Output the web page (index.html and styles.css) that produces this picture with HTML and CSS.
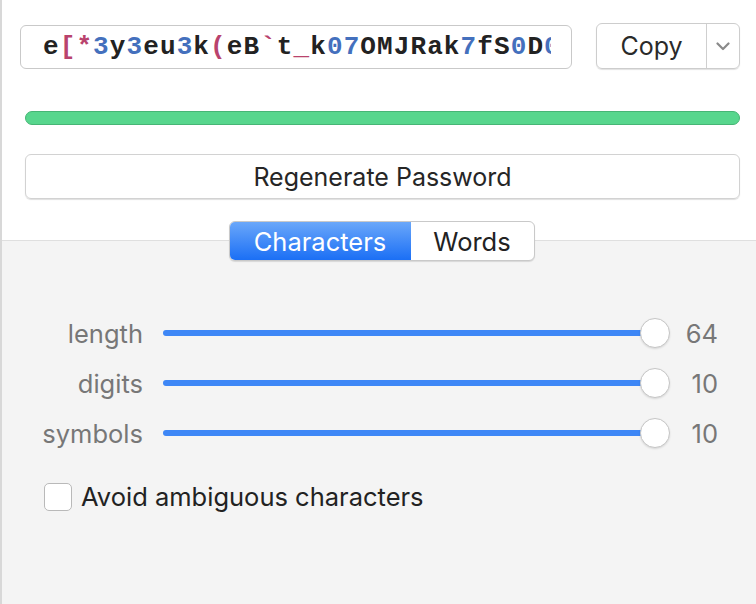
FILE: index.html
```html
<!DOCTYPE html>
<html>
<head>
<meta charset="utf-8">
<link rel="stylesheet" href="styles.css">
</head>
<body>
<div class="app">
  <section class="top">
    <div class="pw-row">
      <div class="pw-field"><span class="pw-text">e<span class="sym">[*</span><span class="dig">3</span>y<span class="dig">3</span>eu<span class="dig">3</span>k<span class="sym">(</span>eB<span class="sym">`</span>t<span class="sym">_</span>k<span class="dig">07</span>OMJRak<span class="dig">7</span>fS<span class="dig">0</span>D<span class="dig">0</span></span></div>
      <div class="copy-btn">
        <span class="copy-label">Copy</span>
        <span class="copy-arrow"><svg width="14" height="9" viewBox="0 0 14 9"><path d="M1.5 1.5 L7 7 L12.5 1.5" fill="none" stroke="#8a8a8a" stroke-width="2.2" stroke-linecap="round" stroke-linejoin="round"/></svg></span>
      </div>
    </div>
    <div class="strength"></div>
    <div class="regen">Regenerate Password</div>
    <div class="seg-wrap">
      <div class="seg">
        <span class="seg-item active">Characters</span>
        <span class="seg-item">Words</span>
      </div>
    </div>
  </section>
  <section class="bottom">
    <div class="opt-row">
      <span class="opt-label">length</span>
      <div class="slider"><span class="track"></span><span class="thumb"></span></div>
      <span class="opt-value">64</span>
    </div>
    <div class="opt-row">
      <span class="opt-label">digits</span>
      <div class="slider"><span class="track"></span><span class="thumb"></span></div>
      <span class="opt-value">10</span>
    </div>
    <div class="opt-row">
      <span class="opt-label">symbols</span>
      <div class="slider"><span class="track"></span><span class="thumb"></span></div>
      <span class="opt-value">10</span>
    </div>
    <label class="check-row">
      <span class="checkbox"></span>
      <span class="check-label">Avoid ambiguous characters</span>
    </label>
  </section>
</div>
</body>
</html>
```
FILE: styles.css
```css
* { box-sizing: border-box; }
html, body { margin: 0; padding: 0; }
body {
  width: 756px;
  height: 604px;
  overflow: hidden;
  font-family: "Inter", "Roboto", "Liberation Sans", sans-serif;
  background: #fff;
}
.app {
  height: 604px;
  display: flex;
  flex-direction: column;
  border-left: 2px solid #d8d8d8;
}
.top {
  flex-shrink: 0;
  height: 241px;
  background: #fff;
  border-bottom: 1px solid #dfdfdf;
  padding: 23px 16px 0 18px;
  display: flex;
  flex-direction: column;
}
.top > * { flex-shrink: 0; }
.pw-row {
  display: flex;
  align-items: flex-end;
  gap: 24px;
  height: 46px;
}
.pw-field {
  flex: 1;
  height: 44px;
  border: 1px solid #c9c9c9;
  border-radius: 6px;
  padding: 0 20px 0 22px;
  display: flex;
  align-items: center;
  overflow: hidden;
}
.pw-text {
  font-family: "Liberation Mono", monospace;
  font-weight: bold;
  font-size: 26px;
  letter-spacing: 1.1px;
  color: #222;
  white-space: nowrap;
  overflow: hidden;
  display: block;
  width: 100%;
}
.sym { color: #b9436d; }
.dig { color: #4470bd; }
.copy-btn {
  width: 144px;
  height: 46px;
  border: 1px solid #cdcdcd;
  border-radius: 6px;
  box-shadow: 0 1px 1px rgba(0,0,0,0.12);
  display: flex;
  align-items: stretch;
}
.copy-label {
  flex: 1;
  display: flex;
  align-items: center;
  justify-content: center;
  font-size: 25px;
  color: #2a2a2a;
  border-right: 1px solid #cfcfcf;
}
.copy-arrow {
  width: 32px;
  display: flex;
  align-items: center;
  justify-content: center;
}
.strength {
  margin: 42px 0 0 5px;
  height: 14px;
  border-radius: 7px;
  background: #57d68d;
  border: 1px solid #46b575;
}
.regen {
  margin: 29px 0 0 5px;
  height: 45px;
  border: 1px solid #d2d2d2;
  border-radius: 6px;
  box-shadow: 0 1px 1px rgba(0,0,0,0.13);
  display: flex;
  align-items: center;
  justify-content: center;
  font-size: 25px;
  color: #262626;
}
.seg-wrap {
  display: flex;
  justify-content: center;
  margin-top: 22px;
  margin-bottom: -21px;
  padding-left: 3px;
  position: relative;
  z-index: 1;
}
.seg {
  display: flex;
  height: 40px;
  border: 1px solid #c9c9c9;
  border-radius: 6px;
  background: #fff;
  box-shadow: 0 1px 1px rgba(0,0,0,0.12);
  overflow: hidden;
}
.seg-item {
  display: flex;
  align-items: center;
  justify-content: center;
  font-size: 25.5px;
  color: #222;
}
.seg-item.active {
  width: 181px;
  color: #fff;
  background: linear-gradient(#6aa7fa, #1b6ff5);
}
.seg-item:last-child { width: 123px; }
.bottom {
  flex: 1;
  background: #f4f4f4;
  padding-top: 67px;
}
.opt-row {
  display: flex;
  align-items: center;
  height: 50px;
}
.opt-label {
  width: 141px;
  text-align: right;
  font-size: 25.5px;
  color: #777;
}
.slider {
  margin-left: 20px;
  width: 507px;
  display: flex;
  align-items: center;
}
.track {
  flex: 1;
  height: 6px;
  border-radius: 3px;
  background: #3e87f6;
}
.thumb {
  width: 30px;
  height: 30px;
  border-radius: 50%;
  background: #fff;
  border: 1px solid #c6c6c6;
  box-shadow: 0 1px 2px rgba(0,0,0,0.12);
  margin-left: -15px;
}
.opt-value {
  width: 48px;
  text-align: right;
  font-size: 25.5px;
  color: #777;
}
.check-row {
  display: flex;
  align-items: center;
  margin: 23px 0 0 42px;
  gap: 9px;
}
.checkbox {
  width: 28px;
  height: 28px;
  border: 1px solid #b9b9b9;
  border-radius: 5px;
  background: #fff;
}
.check-label {
  font-size: 25.5px;
  color: #222;
}
```
